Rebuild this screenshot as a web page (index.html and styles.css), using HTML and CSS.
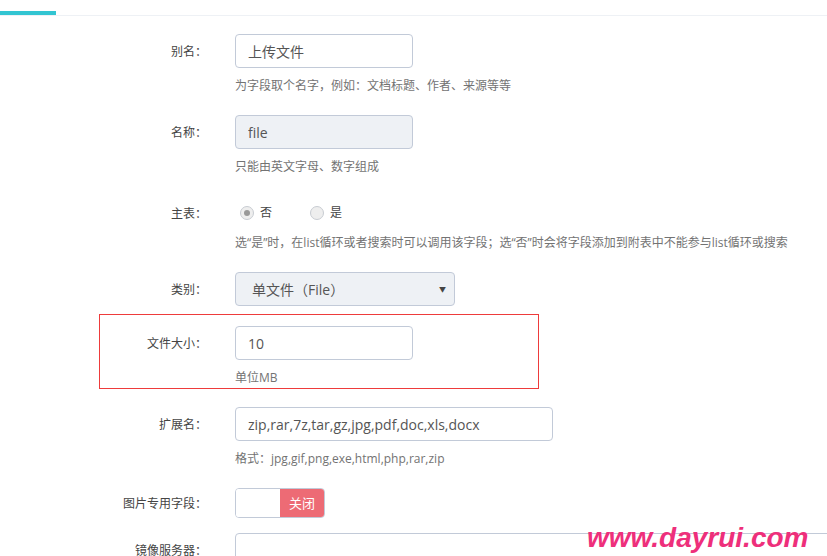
FILE: index.html
```html
<!DOCTYPE html>
<html lang="zh-CN">
<head>
  <meta charset="UTF-8">
  <meta name="viewport" content="width=device-width, initial-scale=1.0">
  <title>字段设置</title>
  <link rel="stylesheet" href="styles.css">
</head>
<body>
  <div class="tabs">
    <div class="tab active"></div>
  </div>

  <form class="form">
    <div class="form-group">
      <label class="control-label">别名：</label>
      <div class="controls">
        <input class="form-control" type="text" value="上传文件">
        <div class="help-block">为字段取个名字，例如：文档标题、作者、来源等等</div>
      </div>
    </div>

    <div class="form-group">
      <label class="control-label">名称：</label>
      <div class="controls">
        <input class="form-control" type="text" value="file" disabled>
        <div class="help-block">只能由英文字母、数字组成</div>
      </div>
    </div>

    <div class="form-group">
      <label class="control-label">主表：</label>
      <div class="controls">
        <div class="radio-list">
          <label class="radio"><span class="radio-dot checked"></span>否</label>
          <label class="radio"><span class="radio-dot"></span>是</label>
        </div>
        <div class="help-block">选“是”时，在list循环或者搜索时可以调用该字段；选“否”时会将字段添加到附表中不能参与list循环或搜索</div>
      </div>
    </div>

    <div class="form-group group-select">
      <label class="control-label">类别：</label>
      <div class="controls">
        <div class="select">
          <span>单文件（File）</span>
          <span class="caret">▼</span>
        </div>
      </div>
    </div>

    <div class="form-group marked">
      <label class="control-label">文件大小：</label>
      <div class="controls">
        <input class="form-control" type="text" value="10">
        <div class="help-block">单位MB</div>
      </div>
    </div>

    <div class="form-group">
      <label class="control-label">扩展名：</label>
      <div class="controls">
        <input class="form-control input-large" type="text" value="zip,rar,7z,tar,gz,jpg,pdf,doc,xls,docx">
        <div class="help-block">格式：jpg,gif,png,exe,html,php,rar,zip</div>
      </div>
    </div>

    <div class="form-group group-switch">
      <label class="control-label">图片专用字段：</label>
      <div class="controls">
        <div class="switch">
          <span class="switch-blank"></span>
          <span class="switch-off">关闭</span>
        </div>
      </div>
    </div>

    <div class="form-group">
      <label class="control-label">镜像服务器：</label>
      <div class="controls">
        <input class="form-control input-xlarge" type="text" value="">
      </div>
    </div>
  </form>

  <div class="watermark">www.dayrui.com</div>
</body>
</html>
```

FILE: styles.css
```css
body {
  margin: 0;
  height: 556px;
  overflow: hidden;
  position: relative;
  background: #fff;
  font-family: "Open Sans", "Noto Sans CJK SC", sans-serif;
  font-size: 12px;
  color: #333;
}

.tabs {
  border-bottom: 1px solid #eef1f5;
}

.tab {
  width: 56px;
  height: 11px;
}

.tab.active {
  border-bottom: 4px solid #32c5d2;
}

.form {
  padding: 18px 0 0 99px;
}

.form-group {
  display: flex;
  align-items: flex-start;
  margin-bottom: 19px;
}

.control-label {
  width: 108px;
  flex-shrink: 0;
  text-align: right;
  line-height: 34px;
  color: #444;
  font-family: "Noto Sans CJK SC", sans-serif;
}

.controls {
  margin-left: 28px;
}

.form-control {
  display: block;
  box-sizing: border-box;
  width: 178px;
  height: 34px;
  padding: 6px 12px;
  border: 1px solid #c2cad8;
  border-radius: 4px;
  background: #fff;
  font-family: "Open Sans", "Noto Sans CJK SC", sans-serif;
  font-size: 14px;
  color: #555;
  outline: none;
}

.form-control[disabled] {
  background: #eef1f5;
}

.input-large {
  width: 318px;
}

.input-xlarge {
  width: 640px;
}

.help-block {
  margin-top: 8px;
  line-height: 20px;
  color: #737373;
  white-space: nowrap;
}

/* radios */
.radio-list {
  display: flex;
  padding-top: 7px;
  line-height: 20px;
}

.radio {
  display: flex;
  align-items: center;
  margin-left: 5px;
  margin-right: 33px;
  color: #444;
}

.radio-dot {
  box-sizing: border-box;
  width: 14px;
  height: 14px;
  margin-right: 6px;
  border: 1px solid #c8ccd2;
  border-radius: 50%;
  background: #eee;
  display: flex;
  align-items: center;
  justify-content: center;
}

.radio-dot.checked::after {
  content: "";
  width: 6px;
  height: 6px;
  border-radius: 50%;
  background: #999;
}

.radio-list + .help-block {
  margin-top: 10px;
}

/* select */
.group-select {
  margin-bottom: 8px;
}

.select {
  box-sizing: border-box;
  width: 220px;
  height: 34px;
  padding: 0 8px 0 16px;
  border: 1px solid #c2cad8;
  border-radius: 4px;
  background: #eef1f5;
  display: flex;
  align-items: center;
  justify-content: space-between;
  font-size: 14px;
  color: #555;
}

.caret {
  font-size: 7px;
  color: #444;
}

/* highlighted row */
.marked {
  box-sizing: border-box;
  width: 440px;
  padding: 11px 0 0;
  border: 1px solid #ee3b3b;
  margin-bottom: 18px;
}

.marked .control-label {
  width: 107px;
}

/* switch */
.group-switch {
  margin-bottom: 15px;
}

.group-switch .control-label {
  line-height: 30px;
}

.switch {
  display: flex;
  box-sizing: border-box;
  width: 90px;
  height: 30px;
  border: 1px solid #c2cad8;
  border-radius: 4px;
  overflow: hidden;
}

.switch-blank {
  width: 44px;
  background: #fff;
}

.switch-off {
  flex: 1;
  background: #ed6b75;
  color: #fff;
  text-align: center;
  line-height: 28px;
  font-size: 13px;
  font-family: "Noto Sans CJK SC", sans-serif;
}

.watermark {
  position: absolute;
  left: 587px;
  top: 524px;
  font-family: "Liberation Sans", Arial, sans-serif;
  font-size: 28px;
  line-height: 28px;
  font-weight: bold;
  font-style: italic;
  color: #ee2f7b;
  white-space: nowrap;
}
```
